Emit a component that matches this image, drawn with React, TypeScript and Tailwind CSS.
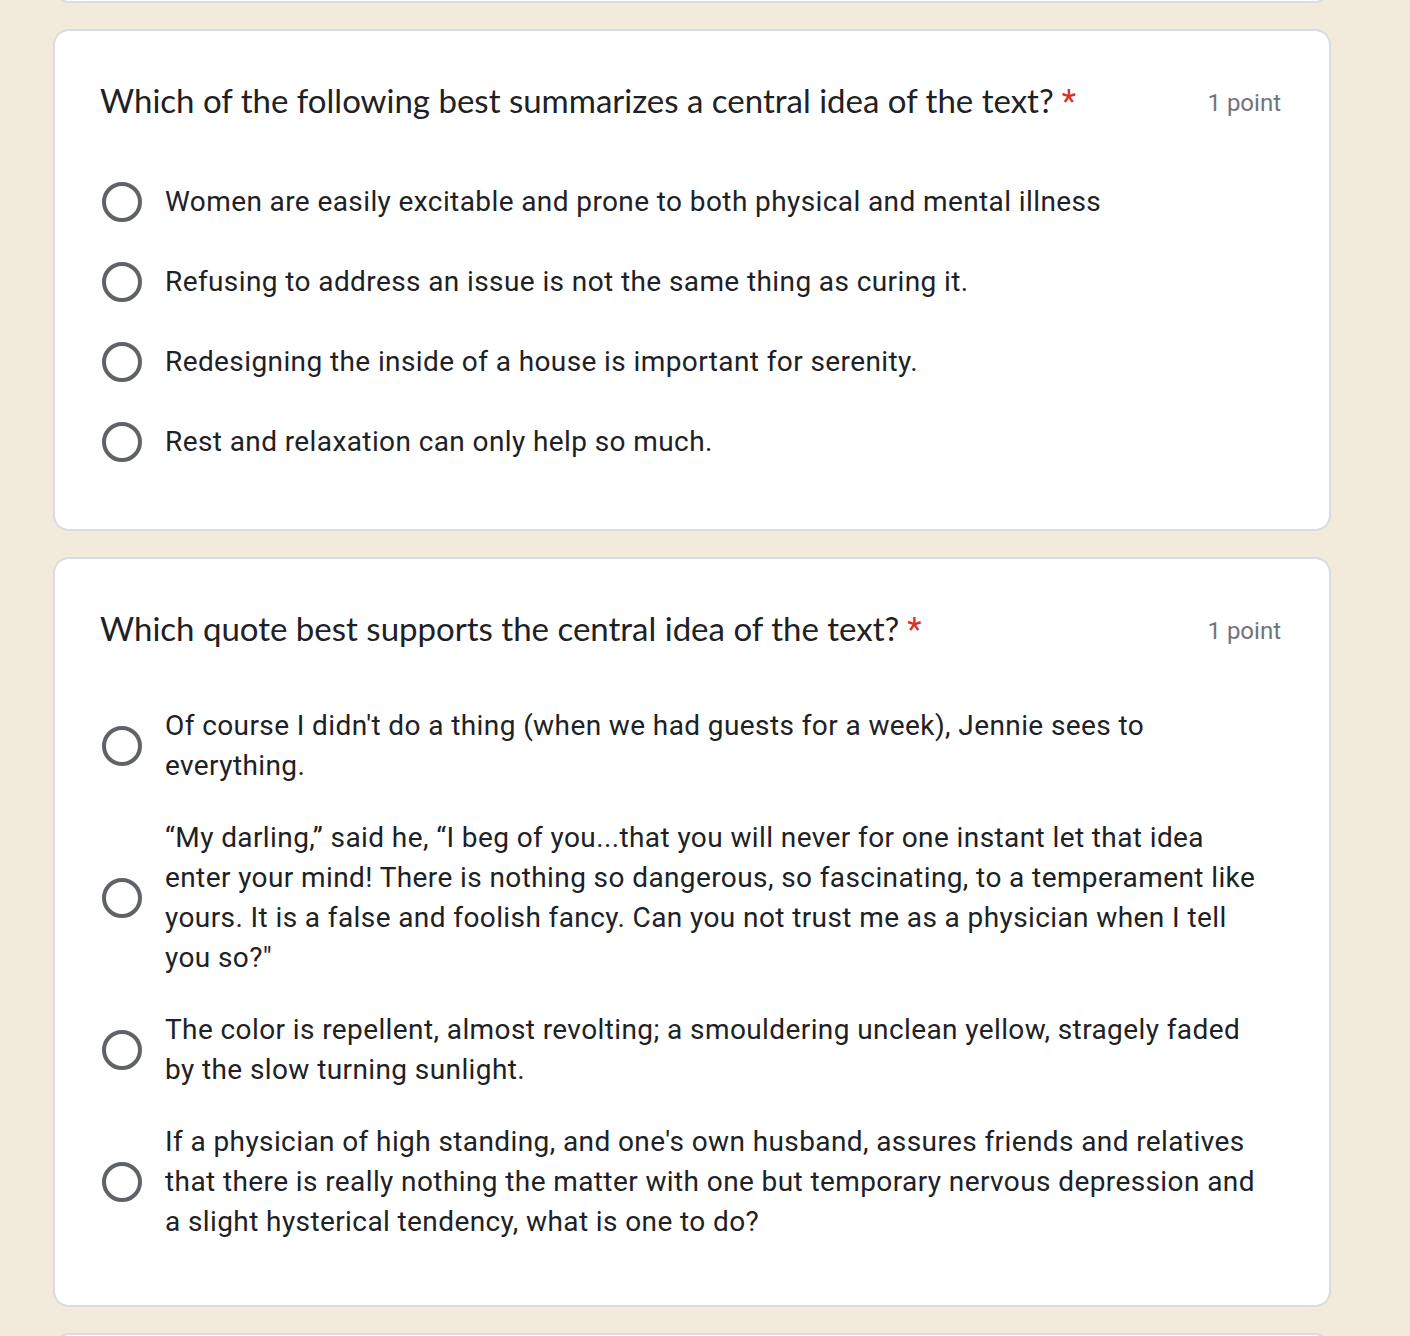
import React from "react";

type Question = {
  title: string;
  options: string[];
};

const questions: Question[] = [
  {
    title: "Which of the following best summarizes a central idea of the text?",
    options: [
      "Women are easily excitable and prone to both physical and mental illness",
      "Refusing to address an issue is not the same thing as curing it.",
      "Redesigning the inside of a house is important for serenity.",
      "Rest and relaxation can only help so much.",
    ],
  },
  {
    title: "Which quote best supports the central idea of the text?",
    options: [
      "Of course I didn't do a thing (when we had guests for a week), Jennie sees to everything.",
      "\u201cMy darling,\u201d said he, \u201cI beg of you...that you will never for one instant let that idea enter your mind! There is nothing so dangerous, so fascinating, to a temperament like yours. It is a false and foolish fancy. Can you not trust me as a physician when I tell you so?\"",
      "The color is repellent, almost revolting; a smouldering unclean yellow, stragely faded by the slow turning sunlight.",
      "If a physician of high standing, and one's own husband, assures friends and relatives that there is really nothing the matter with one but temporary nervous depression and a slight hysterical tendency, what is one to do?",
    ],
  },
];

function Radio() {
  return (
    <div className="w-[40px] h-[48px] flex items-center shrink-0">
      <div className="w-[40px] h-[40px] rounded-full border-[4px] border-[#5f6368]" />
    </div>
  );
}

function QuestionCard({ q }: { q: Question }) {
  return (
    <div className="bg-white border-2 border-[#dadce0] rounded-[16px] pt-[48px] pb-[63px] pl-[47px] pr-[48px]">
      <div className="flex justify-between items-center h-[44px]">
        <div
          className="-ml-[2px] text-[33px] text-[#202124] leading-[44px]"
          style={{ fontFamily: "Lato, 'Noto Sans', sans-serif" }}
        >
          {q.title}
          <span
            className="ml-[8px] text-[33px] text-[#d93025]"
            style={{ fontFamily: "Roboto, sans-serif" }}
          >
            *
          </span>
        </div>
        <div
          className="pt-[3px] text-[24px] text-[#70757a]"
          style={{ fontFamily: "Roboto, sans-serif" }}
        >
          1 point
        </div>
      </div>
      <div className="mt-[55px] flex flex-col gap-8">
        {q.options.map((opt, i) => (
          <div key={i} className="flex items-center">
            <Radio />
            <div
              className="ml-[23px] w-[1100px] text-[28px] leading-[40px] tracking-[0.4px] text-[#202124]"
              style={{ fontFamily: "Roboto, sans-serif" }}
            >
              {opt}
            </div>
          </div>
        ))}
      </div>
    </div>
  );
}

export default function App() {
  return (
    <div className="bg-[#f2eadb] h-[1336px] overflow-hidden pl-[53px]">
      <div className="w-[1278px] flex flex-col gap-[26px]">
        <div className="-mt-[40px] h-[43px] bg-white border-2 border-[#dadce0] rounded-[16px]" />
        {questions.map((q, i) => (
          <QuestionCard key={i} q={q} />
        ))}
        <div className="h-[80px] bg-white border-2 border-[#dadce0] rounded-[16px]" />
      </div>
    </div>
  );
}
